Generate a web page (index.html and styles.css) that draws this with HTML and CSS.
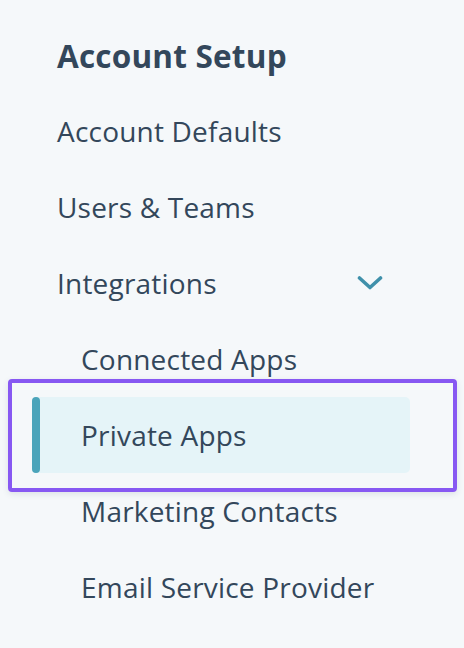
FILE: index.html
```html
<!DOCTYPE html>
<html lang="en">
<head>
<meta charset="utf-8">
<link rel="stylesheet" href="styles.css">
</head>
<body>
<nav class="sidenav">
  <h2 class="title">Account Setup</h2>
  <ul class="menu">
    <li class="item">Account Defaults</li>
    <li class="item">Users &amp; Teams</li>
    <li class="item group">
      <span>Integrations</span>
      <svg class="chev" width="26" height="16" viewBox="0 0 26 16" aria-hidden="true"><path d="M2.5 3 L13 12.5 L23.5 3" fill="none" stroke="#3f90aa" stroke-width="3.6" stroke-linecap="round" stroke-linejoin="round"/></svg>
    </li>
    <li class="sub">Connected Apps</li>
    <li class="sub active"><span class="bar"></span><span class="label">Private Apps</span><span class="ring"></span></li>
    <li class="sub">Marketing Contacts</li>
    <li class="sub">Email Service Provider</li>
  </ul>
</nav>
</body>
</html>
```
FILE: styles.css
```css
html, body {
  margin: 0;
  padding: 0;
  background: #f5f8fa;
}
body {
  width: 464px;
  height: 648px;
  overflow: hidden;
  font-family: "Open Sans", "Noto Sans", sans-serif;
  color: #33475b;
}
.sidenav {
  padding-top: 19px;
}
.title {
  margin: 0;
  padding-left: 57px;
  font-size: 31.5px;
  font-weight: 700;
  line-height: 74px;
  letter-spacing: 0.2px;
}
.menu {
  list-style: none;
  margin: 0;
  padding: 0;
}
.item {
  height: 76px;
  line-height: 76px;
  padding-left: 57px;
  font-size: 28px;
  letter-spacing: 0.2px;
}
.group {
  display: flex;
  align-items: center;
  justify-content: space-between;
  padding-right: 81px;
}
.chev {
  display: block;
}
.sub {
  height: 76px;
  line-height: 76px;
  padding-left: 81px;
  font-size: 28px;
  letter-spacing: 0.2px;
}
.sub.active {
  position: relative;
  display: flex;
  margin-left: 32px;
  width: 378px;
  padding-left: 0;
  background: #e5f4f8;
  border-radius: 5px;
}
.bar {
  width: 8px;
  height: 76px;
  background: #4ba4ba;
  border-radius: 4px;
}
.label {
  padding-left: 41px;
}
.ring {
  position: absolute;
  left: -24px;
  top: -18px;
  right: -47px;
  bottom: -19px;
  border: 4.5px solid #8758f2;
  border-radius: 4px;
  box-shadow: 0 2px 6px rgba(45, 62, 80, 0.12);
  pointer-events: none;
}
```
